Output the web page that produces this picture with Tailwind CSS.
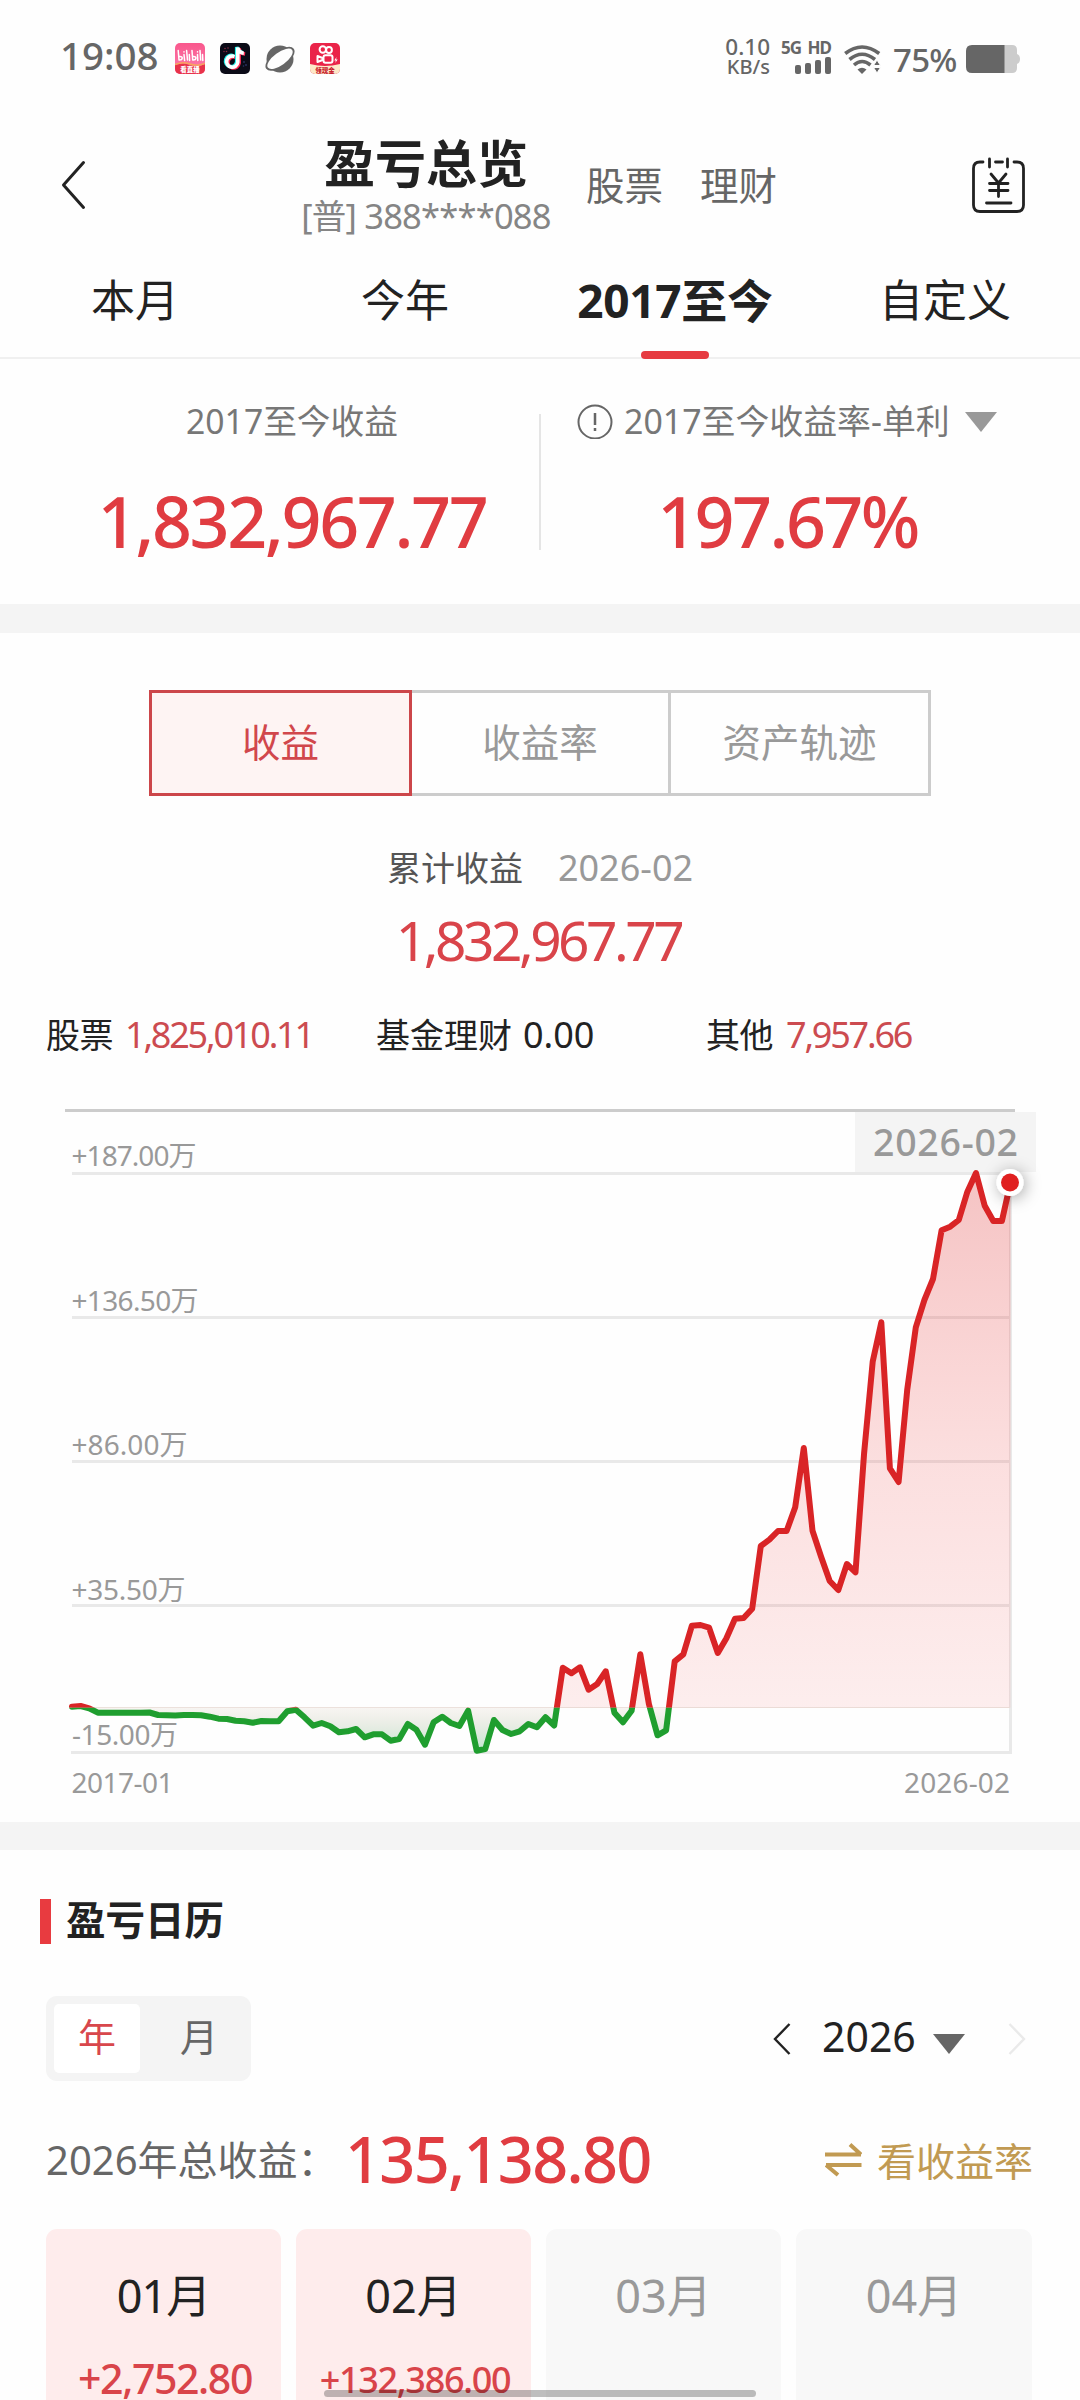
<!DOCTYPE html>
<html lang="zh-CN">
<head>
<meta charset="utf-8">
<title>盈亏总览</title>
<script src="https://cdn.jsdelivr.net/npm/@tailwindcss/browser@4"></script>
</head>
<body class="relative w-[1080px] h-[2400px] overflow-hidden bg-[#fefefe] text-[#222] leading-none whitespace-nowrap font-['Noto_Sans','Noto_Sans_CJK_SC',sans-serif]">

<!-- Status bar -->
<header class="flex h-[112px] pl-[60px] text-[#666]">
  <div class="flex h-[110px] items-center">
    <span class="w-[115px] text-[38.500px] font-medium">19:08</span>
    <div class="flex gap-[15px] mt-[6px]">
      <svg class="w-[30px] h-[31px]" viewBox="0 0 30 31">
        <defs>
          <linearGradient id="pk" x1="0" y1="0" x2="0" y2="1"><stop offset="0" stop-color="#f9578c"/><stop offset="1" stop-color="#fd7fb0"/></linearGradient>
          <clipPath id="rc"><rect width="30" height="31" rx="5"/></clipPath>
        </defs>
        <g clip-path="url(#rc)">
          <rect width="30" height="31" fill="url(#pk)"/>
          <path d="M0 22Q8 19 15 22T30 21V31H0Z" fill="#e8324a"/>
          <path d="M0 21.500Q8 18.500 15 21T30 20.500" fill="none" stroke="#f7a55c" stroke-width="1.500"/>
          <g fill="none" stroke="#fff" stroke-width="1.500" stroke-linecap="round">
            <path d="M3.200 7.500L4 17M4 17c4 .3 4.500-4 .3-3.500M9 11.500l.6 6M9 8.800v.2M11.600 7.500l.9 9.500M14.300 11.500l.3 6"/>
            <path d="M17 7.500l.7 9.500M17.700 17c4 .3 4.500-4 .3-3.500M22.500 11.500l.3 6M22.500 8.800v.2M25 7.500l.7 9.500M27.500 11.500l.3 6"/>
          </g>
          <text x="15" y="29" text-anchor="middle" font-size="6.500" font-weight="900" fill="#fff">看直播</text>
        </g>
      </svg>
      <svg class="w-[30px] h-[31px]" viewBox="0 0 30 31">
        <rect width="30" height="31" rx="5" fill="#0b0b17"/>
        <g fill="#8a2a44"><circle cx="5" cy="5.500" r=".8"/><circle cx="8" cy="5" r=".8"/><circle cx="6.500" cy="8.500" r=".8"/><circle cx="4" cy="8.500" r=".7"/></g>
        <g fill="#2b3566"><circle cx="24" cy="19" r=".9"/><circle cx="26" cy="22" r=".9"/><circle cx="23.500" cy="23" r=".8"/></g>
        <g fill="none" stroke-width="3.600">
          <path d="M14.800 13.500a5.600 5.600 0 1 0 3.300 5.800V4.500q1 5.200 6 5.700" stroke="#fe2c55" transform="translate(1 .8)"/>
          <path d="M14.300 13.500a5.600 5.600 0 1 0 3.300 5.800V4.500q1 5.200 6 5.700" stroke="#25f4ee" transform="translate(-.9 -.6)"/>
          <path d="M14.500 13.500a5.600 5.600 0 1 0 3.300 5.800V4.500q1 5.200 6 5.700" stroke="#fff"/>
        </g>
      </svg>
      <svg class="w-[30px] h-[31px]" viewBox="0 0 30 31">
        <circle cx="15" cy="16" r="13.500" fill="#666"/>
        <ellipse cx="15" cy="15.800" rx="17" ry="8" transform="rotate(-36 15 15.800)" fill="#666"/>
        <ellipse cx="15" cy="15.800" rx="15" ry="6.300" transform="rotate(-36 15 15.800)" fill="#fefefe"/>
      </svg>
      <svg class="w-[30px] h-[31px]" viewBox="0 0 30 31">
        <g clip-path="url(#rc)">
          <rect width="30" height="31" fill="#ea2449"/>
          <path d="M0 21Q15 25 30 21V31H0Z" fill="#fde9c8"/>
          <g fill="none" stroke="#fff" stroke-width="2">
            <circle cx="12.800" cy="6.500" r="3.200"/><circle cx="19" cy="7" r="2.900"/>
            <rect x="13.500" y="12.300" width="9" height="7.500" rx="2"/>
            <path d="M12.500 15l-5-2v6l5-2z" stroke-linejoin="round"/>
          </g>
          <path d="M26.500 14l-2.200 3.500h1.600l-.7 2.500 2.500-3.600h-1.600z" fill="#fff"/>
          <text x="15" y="29.500" text-anchor="middle" font-size="6.500" font-weight="900" fill="#c8202c">领现金</text>
        </g>
      </svg>
    </div>
  </div>
  <div class="ml-auto mr-[60px] flex h-[112px] items-center">
    <div class="mr-[13px] mt-[1px] flex w-[46px] flex-col items-end text-right font-medium">
      <span class="h-[20px] leading-[20px] text-[22.500px]">0.10</span>
      <span class="h-[20px] leading-[20px] text-[20px]">KB/s</span>
    </div>
    <div class="mr-[13px] mt-[2px] flex w-[48px] flex-col items-end">
      <span class="h-[17px] leading-[15px] text-[17px] font-bold tracking-[-1px] [word-spacing:3px]">5G HD</span>
      <svg class="h-[17px] w-[36px]" viewBox="0 0 36 17" fill="#666"><rect x="0" y="8" width="6" height="9" rx="2"/><rect x="10" y="6" width="6" height="11" rx="2"/><rect x="20" y="3" width="6" height="14" rx="2"/><rect x="30" y="0" width="6" height="17" rx="2"/></svg>
    </div>
    <svg class="mr-[12px] mt-[6px] h-[29px] w-[37px]" viewBox="0 0 37 29" fill="none" stroke="#666" stroke-width="3.600">
      <path d="M1.200 8.500Q18 -4.500 35.200 8.500"/><path d="M5.500 14.500Q18 4 31 14.500"/><path d="M10 20Q18 13 26.500 20"/>
      <path d="M13.500 24.500Q18 21 22.500 24.500L18 29Z" fill="#666" stroke="none"/>
      <path d="M29.500 20.500L33 15l3.500 5.500zM29.500 22.500h7L33 28z" fill="#666" stroke="#fefefe" stroke-width="1"/>
    </svg>
    <span class="mr-[9px] mt-[6px] w-[64px] text-[33px] font-medium tracking-[-0.7px]">75%</span>
    <svg class="mt-[6px] h-[28px] w-[54px]" viewBox="0 0 54 28"><path d="M38 0h8q5 0 5 5v4q3 1 3 5t-3 5v4q0 5-5 5h-8z" fill="#ccc"/><path d="M6 0h32.500v28H6q-6 0-6-6V6q0-6 6-6z" fill="#666"/></svg>
  </div>
</header>

<!-- Title bar -->
<nav class="flex h-[142px] items-center">
  <svg class="ml-[61px] mt-[4px] h-[50px] w-[25px]" viewBox="0 0 25 50" fill="none" stroke="#222" stroke-width="3" stroke-linecap="round" stroke-linejoin="round"><path d="M22.500 2.500L2.500 25l20 22.500"/></svg>
  <div class="ml-[215px] flex w-[250px] flex-col items-center">
    <h1 class="mt-[12px] h-[57px] text-[51px] leading-[58px] font-bold text-[#222]">盈亏总览</h1>
    <p class="h-[54px] text-[34.500px] leading-[50px] tracking-[-0.8px] text-[#858585]">[普] 388****088</p>
  </div>
  <div class="ml-[35px] mt-[4px] flex gap-[37px] text-[38.500px] text-[#666]"><span>股票</span><span>理财</span></div>
  <svg class="ml-auto mr-[54px] mt-[4px] h-[57px] w-[55px]" viewBox="971 157 55 57" fill="none" stroke="#222" stroke-width="2.800" stroke-linecap="round">
    <path d="M983 162h-3q-6.500 0-6.500 6.500V205q0 6.500 6.500 6.500h37q6.500 0 6.500-6.500v-36.500q0-6.500-6.500-6.500h-3M995.500 162h7M989.500 159v8M1007.500 159v8"/>
    <path d="M991 174l7.500 9 7.500-9M998.500 183v13.500M989.500 183.500h18.500M989.500 190.500h18.500M986.500 203h24.500" />
  </svg>
</nav>

<!-- Period tabs -->
<div class="grid h-[105px] grid-cols-4 border-b-2 border-[#f0f0f0] text-center text-[44px] leading-[92px]">
  <span>本月</span><span>今年</span>
  <span class="relative font-bold text-[46px] tracking-[-0.3px]">2017至今<i class="absolute bottom-[-2px] left-[101px] h-[8px] w-[68px] rounded-full bg-[#e63b41]"></i></span>
  <span>自定义</span>
</div>

<!-- Totals -->
<section class="flex h-[245px] items-start text-center">
  <div class="w-[584px]">
    <p class="mt-[45px] h-[34px] leading-[34px] text-[33.700px] text-[#777]">2017至今收益</p>
    <p class="mt-[48px] h-[70px] leading-[70px] text-[70px] font-medium tracking-[-2.400px] text-[#e03c41]">1,832,967.77</p>
  </div>
  <div class="ml-[-45px] mt-[55px] h-[136px] w-[2px] bg-[#e5e5e5]"></div>
  <div class="ml-[36px] w-[424px]">
    <p class="mt-[45px] flex h-[34px] items-center leading-[34px] text-[33.900px] text-[#777]">
      <svg class="mr-[11px] h-[36px] w-[36px]" viewBox="0 0 36 36" fill="none" stroke="#666" stroke-width="2"><circle cx="18" cy="19" r="16.500"/><path d="M18 10v12M18 25v3" stroke-width="2.500"/></svg>2017至今收益率-单利
      <svg class="ml-[15px] mt-[2px] h-[20px] w-[32px]" viewBox="0 0 32 20"><path d="M0 0h32L16 20z" fill="#999"/></svg></p>
    <p class="mt-[48px] h-[70px] leading-[70px] text-[70px] font-medium tracking-[-2.600px] text-[#e03c41] pr-[3px]">197.67%</p>
  </div>
</section>
<div class="h-[29px] bg-[#f4f4f4]"></div>

<!-- Chart switcher -->
<section class="h-[1189px] pt-[57px]">
  <div class="mx-auto flex h-[106px] w-[782px] text-center text-[38.500px] leading-[98px] text-[#999]">
    <span class="w-[263px] border-3 border-[#cc464a] bg-[#fef4f3] text-[#d1474c]">收益</span>
    <span class="w-[259px] border-y-3 border-r-3 border-[#ccc]">收益率</span>
    <span class="w-[260px] border-y-3 border-r-3 border-[#ccc]">资产轨迹</span>
  </div>
  <p class="mt-[54px] flex h-[36px] items-center justify-center gap-[35px] text-[34px]"><span class="text-[#555]">累计收益</span><span class="text-[36px] text-[#999]">2026-02</span></p>
  <p class="mt-[24px] h-[60px] pr-[3px] text-center text-[55px] leading-[60px] tracking-[-3.500px] text-[#d9444a]">1,832,967.77</p>
  <div class="mt-[47px] ml-[46px] grid h-[36px] grid-cols-[330px_330px_1fr] items-center text-[34px]">
    <p class="flex items-center"><span class="tracking-[-0.5px]">股票</span><b class="ml-[12px] font-normal text-[36px] tracking-[-2.200px] text-[#cc4b50]">1,825,010.11</b></p>
    <p class="flex items-center"><span>基金理财</span><b class="ml-[11px] font-normal text-[36px]">0.00</b></p>
    <p class="flex items-center"><span class="tracking-[-0.5px]">其他</span><b class="ml-[13px] font-normal text-[36px] tracking-[-2.200px] text-[#cc4b50]">7,957.66</b></p>
  </div>

  <svg id="chart" class="mt-[47px] block h-[710px] w-[1080px]" viewBox="0 1100 1080 710">
    <defs>
      <linearGradient id="rf" gradientUnits="userSpaceOnUse" x1="0" y1="1173" x2="0" y2="1708"><stop offset="0" stop-color="#dc2425" stop-opacity=".27"/><stop offset=".55" stop-color="#ee3030" stop-opacity=".15"/><stop offset="1" stop-color="#f03030" stop-opacity=".08"/></linearGradient>
      <linearGradient id="gf" gradientUnits="userSpaceOnUse" x1="0" y1="1708" x2="0" y2="1752"><stop offset="0" stop-color="#a07850" stop-opacity=".07"/><stop offset="1" stop-color="#1fb05f" stop-opacity=".28"/></linearGradient>
      <clipPath id="up"><path d="M0 1100h1080v607.700H0z"/></clipPath>
      <clipPath id="dn"><path d="M0 1707.700h1080v100H0z"/></clipPath>
      <filter id="sh" x="-100%" y="-100%" width="300%" height="300%"><feDropShadow dx="2" dy="2" stdDeviation="8" flood-color="#000" flood-opacity=".35"/></filter>
    </defs>
    <path d="M65 1110.500h950" stroke="#ccc" stroke-width="3"/>
    <path d="M72 1173.500h938.500M72 1317.500h938.500M72 1461.500h938.500M72 1605.500h938.500M71 1752.500h941M1010.500 1182v570" stroke="#e9e9e9" stroke-width="3" fill="none"/>
    <rect x="855" y="1112" width="181" height="60" fill="#f4f4f4"/>
    <path d="M72 1707.500h938" stroke="#ece4e0" stroke-width="1"/>
    <path id="ra" fill="url(#rf)" clip-path="url(#up)"/>
    <path id="ga" fill="url(#gf)" clip-path="url(#dn)"/>
    <g fill="none" stroke-width="6" stroke-linejoin="round" stroke-linecap="round">
      <path id="rl" stroke="#d92426" clip-path="url(#up)"/>
      <path id="gl" stroke="#1f9e2f" clip-path="url(#dn)"/>
    </g>
    <g font-size="28" fill="#999">
      <text x="71.500" y="1166" textLength="125">+187.00万</text>
      <text x="71.500" y="1311" textLength="127">+136.50万</text>
      <text x="71.500" y="1455" textLength="116">+86.00万</text>
      <text x="71.500" y="1600" textLength="114">+35.50万</text>
      <text x="72" y="1745" textLength="106">-15.00万</text>
      <text x="71.500" y="1793" textLength="102">2017-01</text>
      <text x="904" y="1793" textLength="106">2026-02</text>
      <text x="873" y="1156" font-size="37.500" font-weight="500" textLength="145">2026-02</text>
    </g>
    <circle cx="1010" cy="1182.500" r="13.500" fill="#fff" filter="url(#sh)"/>
    <circle cx="1010" cy="1182.500" r="9" fill="#e02020"/>
  </svg>
</section>
<div class="h-[28px] bg-[#f4f4f4]"></div>

<!-- Profit calendar -->
<section class="h-[550px] overflow-hidden pt-[48px]">
  <h2 class="ml-[40px] flex h-[46px] items-center gap-[15px] text-[39.500px] font-bold"><i class="h-[45px] w-[11px] bg-[#e83b40]"></i><span class="pb-[1px]">盈亏日历</span></h2>
  <div class="mt-[52px] ml-[46px] flex h-[85px] items-center">
    <div class="flex h-[85px] w-[205px] shrink-0 rounded-[11px] bg-[#f4f4f4] p-[8px] text-center text-[38px] leading-[65px]">
      <span class="h-[69px] w-[86px] shrink-0 rounded-[5px] bg-white text-[#d8474c]">年</span>
      <span class="w-[118px] shrink-0 text-[#666]">月</span>
    </div>
    <svg class="ml-[521px] h-[34px] w-[20px]" viewBox="0 0 20 34" fill="none" stroke="#222" stroke-width="2.400"><path d="M17.500 2L3 17l14.500 15"/></svg>
    <span class="ml-[30px] w-[95px] text-[41px] mt-[-4px]">2026</span>
    <svg class="ml-[16px] mt-[11px] h-[20px] w-[32px]" viewBox="0 0 32 20"><path d="M0 0h32L16 20z" fill="#666"/></svg>
    <svg class="ml-[42px] h-[34px] w-[20px]" viewBox="0 0 20 34" fill="none" stroke="#eaeaea" stroke-width="2.400"><path d="M2.500 2L17 17 2.500 32"/></svg>
  </div>
  <div class="mt-[49px] ml-[46px] flex h-[60px] items-center">
    <span class="w-[299px] text-[40px] text-[#666]">2026年总收益：</span>
    <strong class="pb-[3px] text-[63px] font-medium tracking-[-1.700px] text-[#e03c41]">135,138.80</strong>
    <span class="ml-auto mr-[47px] flex items-center gap-[15px] text-[39px] text-[#c19a52]">
      <svg class="h-[34px] w-[37px]" viewBox="0 0 37 34" fill="none" stroke="#c19a52" stroke-width="4"><path d="M0 11.500h36M25 1.500l11 10M36.500 22H1M1 22l12 10" stroke-linejoin="bevel"/></svg>看收益率</span>
  </div>
  <div class="mt-[39px] ml-[46px] flex h-[171px] gap-[15px] text-center text-[45px] text-[#999]">
    <div class="w-[235px] rounded-t-[11px] bg-[#feecec]"><p class="mt-[42px] h-[50px] leading-[50px] tracking-[-1px] text-[#222]">01月</p><p class="mt-[32px] h-[46px] pl-[3px] text-[41px] leading-[50px] font-medium tracking-[-1.400px] text-[#d9444a]">+2,752.80</p></div>
    <div class="w-[235px] rounded-t-[11px] bg-[#feecec]"><p class="mt-[42px] h-[50px] leading-[50px] text-[#222]">02月</p><p class="mt-[34px] h-[44px] pl-[3px] text-[36px] leading-[50px] font-medium tracking-[-1.300px] text-[#d9444a]">+132,386.00</p></div>
    <div class="w-[235px] rounded-t-[11px] bg-[#f8f8f8]"><p class="mt-[42px] h-[50px] leading-[50px]">03月</p></div>
    <div class="w-[236px] rounded-t-[11px] bg-[#f8f8f8]"><p class="mt-[42px] h-[50px] leading-[50px]">04月</p></div>
  </div>
</section>

<!-- Gesture bar -->
<div class="absolute top-[2390px] left-[324px] h-[7px] w-[432px] rounded-full bg-black/25"></div>

<script>
// Monthly cumulative profit, 2017-01 to 2026-02, as chart heights
const ys = [1706.7,1706,1708.3,1712.7,1712.7,1712.7,1712.7,1712.7,1712.7,1712.5,1715,1715.3,1715.5,1715,1715,1715.3,1716.7,1718.7,1719,1720.7,1721.3,1722.7,1721,1721.3,1721.3,1711.3,1709.7,1717.3,1725.7,1723,1726.3,1732.3,1731.3,1729,1737.3,1734.3,1734.3,1740.7,1739,1724,1729.7,1744.7,1722.3,1716.7,1723,1726,1710.7,1750.7,1749,1720,1730,1734,1731.3,1724,1727.3,1717.3,1725.5,1667.7,1673.3,1667.3,1689.7,1684,1671.3,1712.7,1722.3,1710.7,1654.3,1704,1735.3,1730.3,1661.3,1654.3,1625.7,1625,1627.7,1653,1638.3,1618.7,1618,1608.7,1546,1539.7,1531,1531,1507.3,1448,1530.7,1556.7,1581,1590,1564,1572.3,1453.3,1361.7,1322.3,1468.3,1482,1390,1327.3,1300,1279,1230.3,1226.7,1220,1191.7,1173,1205.7,1221,1221,1182.3];
const line = 'M' + ys.map((y, i) => (72 + 8.61 * i).toFixed(1) + ' ' + y).join('L');
const area = line + 'V1707.7H72Z';
for (const [id, d] of [['rl', line], ['gl', line], ['ra', area], ['ga', area]]) document.getElementById(id).setAttribute('d', d);
</script>
</body>
</html>
